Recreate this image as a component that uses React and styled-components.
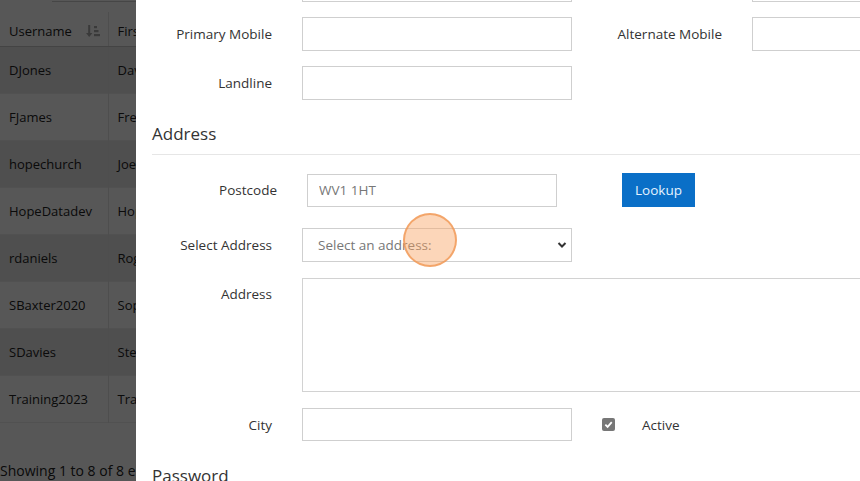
import React from 'react';
import styled, { createGlobalStyle } from 'styled-components';

const GlobalStyle = createGlobalStyle`
  html, body {
    margin: 0;
    padding: 0;
  }
  body {
    font-family: 'Open Sans', 'Noto Sans', sans-serif;
    background: #fff;
    color: #333;
  }
`;

const Screen = styled.div`
  position: relative;
  width: 860px;
  height: 481px;
  overflow: hidden;
`;

/* ---------- page behind the dialog ---------- */

const ListPage = styled.div`
  width: 136px;
  overflow: hidden;
`;

const SearchStrip = styled.div`
  height: 12px;
  padding-left: 52px;
`;

const SearchBox = styled.div`
  width: 300px;
  height: 1px;
  border-bottom: 1px solid #ccc;
`;

const Table = styled.table`
  border-collapse: collapse;
  width: 420px;
  font-size: 13px;
  color: #222;
`;

const HeadCell = styled.th`
  height: 34px;
  padding: 4px 8px 0 9px;
  text-align: left;
  font-weight: 500;
  border-bottom: 1px solid #c8c8c8;
  border-right: 1px solid #e4e4e4;
  width: ${(p) => p.$w || 'auto'};
  box-sizing: border-box;
`;

const HeadInner = styled.div`
  display: flex;
  align-items: center;
  justify-content: space-between;
`;

const Row = styled.tr`
  height: 47px;
  background: ${(p) => (p.$odd ? '#e6e6e6' : '#fff')};
  border-bottom: 1px solid #ececec;
`;

const Cell = styled.td`
  padding: 0 8px 0 9px;
  border-right: 1px solid #e4e4e4;
  white-space: nowrap;
`;

const Footer = styled.div`
  margin-top: 38px;
  font-size: 14px;
  color: #222;
  white-space: nowrap;
`;

const Backdrop = styled.div`
  position: absolute;
  inset: 0;
  background: rgba(0, 0, 0, 0.66);
`;

/* ---------- dialog ---------- */

const Dialog = styled.div`
  position: absolute;
  top: 0;
  bottom: 0;
  left: 136px;
  width: 900px;
  background: #fff;
  overflow: hidden;
`;

const DialogBody = styled.div`
  margin-top: -32px;
  padding: 0 16px;
`;

const FormRow = styled.div`
  display: flex;
  align-items: ${(p) => (p.$top ? 'flex-start' : 'center')};
  margin-bottom: ${(p) => p.$mb ?? 15}px;
  padding-left: ${(p) => p.$indent || 0}px;
`;

const Group = styled.div`
  display: flex;
  align-items: center;
  margin-right: 18px;
`;

const Label = styled.label`
  width: ${(p) => p.$w || 120}px;
  margin-right: 30px;
  text-align: right;
  font-size: 13.5px;
  color: #333;
  padding-top: ${(p) => p.$pt || 0}px;
  flex-shrink: 0;
`;

const TextInput = styled.input`
  box-sizing: border-box;
  width: ${(p) => p.$w || 270}px;
  height: ${(p) => p.$h || 34}px;
  border: 1px solid #cfcfcf;
  border-radius: 0;
  padding: 0 11px;
  font-family: inherit;
  font-size: 13.5px;
  color: #777;
  outline: none;
`;

const TextArea = styled.textarea`
  box-sizing: border-box;
  width: 620px;
  height: 114px;
  border: 1px solid #d2d2d2;
  border-radius: 0;
  resize: none;
  font-family: inherit;
  outline: none;
`;

const SelectWrap = styled.div`
  position: relative;
  width: 270px;
  height: 34px;
`;

const Select = styled.select`
  box-sizing: border-box;
  appearance: none;
  width: 100%;
  height: 100%;
  border: 1px solid #cfcfcf;
  border-radius: 0;
  background: #fff;
  padding: 0 15px;
  font-family: inherit;
  font-size: 13.5px;
  color: #777;
  outline: none;
`;

const Chevron = styled.svg`
  position: absolute;
  right: 5px;
  top: 13px;
  pointer-events: none;
`;

const LookupButton = styled.button`
  margin-left: 65px;
  width: 73px;
  height: 34px;
  border: none;
  border-radius: 0;
  background: #0a6fc7;
  color: #e6f3ff;
  font-family: inherit;
  font-size: 13.5px;
`;

const Section = styled.h3`
  margin: ${(p) => p.$mt || 22}px 0 ${(p) => p.$mb || 18}px;
  padding-bottom: 8px;
  border-bottom: 1px solid #e6e6e6;
  font-size: 17px;
  font-weight: 400;
  line-height: 24px;
  color: #333;
`;

const CheckBox = styled.span`
  display: inline-flex;
  align-items: center;
  justify-content: center;
  width: 13px;
  height: 13px;
  margin-left: 30px;
  border-radius: 2px;
  background: #777;
`;

const CheckLabel = styled.span`
  margin-left: 27px;
  font-size: 13.5px;
  color: #333;
`;

const ClickMarker = styled.div`
  position: absolute;
  left: 403px;
  top: 213px;
  width: 50px;
  height: 50px;
  border-radius: 50%;
  background: rgba(248, 165, 100, 0.45);
  border: 2px solid rgba(240, 150, 80, 0.75);
`;

const users = [
  ['DJones', 'David'],
  ['FJames', 'Fred'],
  ['hopechurch', 'Joe'],
  ['HopeDatadev', 'Hope'],
  ['rdaniels', 'Roger'],
  ['SBaxter2020', 'Sophie'],
  ['SDavies', 'Steve'],
  ['Training2023', 'Training'],
];

const SortIcon = () => (
  <svg width="14" height="14" viewBox="0 0 14 14" fill="#aaa">
    <rect x="2.2" y="1" width="2" height="9" />
    <polygon points="0,9 6.4,9 3.2,13" />
    <rect x="8" y="2" width="3" height="2.2" />
    <rect x="8" y="6" width="4.5" height="2.2" />
    <rect x="8" y="10" width="6" height="2.2" />
  </svg>
);

export default function App() {
  return (
    <Screen>
      <GlobalStyle />
      <ListPage>
        <SearchStrip>
          <SearchBox />
        </SearchStrip>
        <Table>
          <thead>
            <tr>
              <HeadCell $w="108px">
                <HeadInner>
                  Username
                  <SortIcon />
                </HeadInner>
              </HeadCell>
              <HeadCell>First Name</HeadCell>
            </tr>
          </thead>
          <tbody>
            {users.map(([u, f], i) => (
              <Row key={u} $odd={i % 2 === 0}>
                <Cell>{u}</Cell>
                <Cell>{f}</Cell>
              </Row>
            ))}
          </tbody>
        </Table>
        <Footer>Showing 1 to 8 of 8 entries</Footer>
      </ListPage>
      <Backdrop />

      <Dialog>
        <DialogBody>
          <FormRow>
            <Group>
              <Label>Email</Label>
              <TextInput />
            </Group>
            <Group>
              <Label $w={132}>Job Title</Label>
              <TextInput />
            </Group>
          </FormRow>
          <FormRow>
            <Group>
              <Label>Primary Mobile</Label>
              <TextInput />
            </Group>
            <Group>
              <Label $w={132}>Alternate Mobile</Label>
              <TextInput />
            </Group>
          </FormRow>
          <FormRow>
            <Group>
              <Label>Landline</Label>
              <TextInput />
            </Group>
          </FormRow>

          <Section>Address</Section>

          <FormRow $indent={5} $mb={21}>
            <Label>Postcode</Label>
            <TextInput $w={250} $h={33} defaultValue="WV1 1HT" />
            <LookupButton>Lookup</LookupButton>
          </FormRow>
          <FormRow $mb={16}>
            <Label>Select Address</Label>
            <SelectWrap>
              <Select defaultValue="">
                <option value="">Select an address:</option>
              </Select>
              <Chevron width="10" height="8" viewBox="0 0 10 8">
                <polyline points="1.5,2 5,5.5 8.5,2" fill="none" stroke="#333" strokeWidth="2" />
              </Chevron>
            </SelectWrap>
          </FormRow>
          <FormRow $top $mb={16}>
            <Label $pt={7}>Address</Label>
            <TextArea />
          </FormRow>
          <FormRow $mb={0}>
            <Label>City</Label>
            <TextInput $h={33} />
            <CheckBox>
              <svg width="9" height="9" viewBox="0 0 10 10">
                <polyline points="1.5,5.2 4,7.6 8.6,2.4" fill="none" stroke="#fff" strokeWidth="2" />
              </svg>
            </CheckBox>
            <CheckLabel>Active</CheckLabel>
          </FormRow>

          <Section $mt={23}>Password</Section>
        </DialogBody>
      </Dialog>
      <ClickMarker />
    </Screen>
  );
}
